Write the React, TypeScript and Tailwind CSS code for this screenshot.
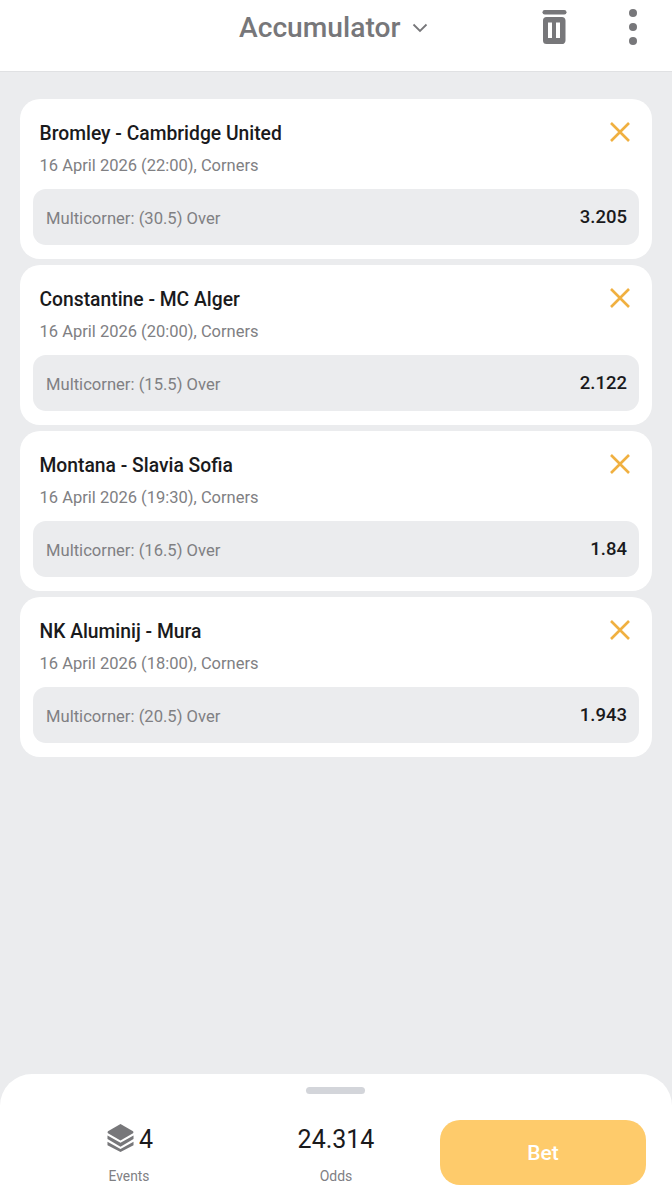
const bets = [
  { title: "Bromley - Cambridge United", date: "16 April 2026 (22:00), Corners", market: "Multicorner: (30.5) Over", odds: "3.205" },
  { title: "Constantine - MC Alger", date: "16 April 2026 (20:00), Corners", market: "Multicorner: (15.5) Over", odds: "2.122" },
  { title: "Montana - Slavia Sofia", date: "16 April 2026 (19:30), Corners", market: "Multicorner: (16.5) Over", odds: "1.84" },
  { title: "NK Aluminij - Mura", date: "16 April 2026 (18:00), Corners", market: "Multicorner: (20.5) Over", odds: "1.943" },
];

function Card({ b }: { b: (typeof bets)[number] }) {
  return (
    <div className="relative h-[160px] rounded-[20px] bg-white px-[13px] pt-[21px]">
      <div className="pl-[6.5px] text-[19.3px] leading-[28px] font-medium text-[#1a1a1c]">{b.title}</div>
      <div className="mt-[7px] pl-[6.5px] text-[16.5px] leading-[22px] text-[#808083]">{b.date}</div>
      <div className="mt-[12px] flex h-[56px] items-center justify-between rounded-[13px] bg-[#ebecee] pr-[12px] pl-[13px] pt-[2px]">
        <span className="relative top-[1px] text-[16.6px] text-[#808083]">{b.market}</span>
        <span className="text-[18.5px] font-medium text-[#1a1a1c]">{b.odds}</span>
      </div>
      <svg className="absolute top-[23px] right-[22px]" width="20" height="20" viewBox="0 0 20 20" fill="none" stroke="#f0b040" strokeWidth="2.6">
        <path d="M1 1 L19 19 M19 1 L1 19" />
      </svg>
    </div>
  );
}

export default function App() {
  return (
    <div className="flex h-[1199px] w-[672px] flex-col overflow-hidden bg-[#ebecee] font-['Roboto',sans-serif]">
      <header className="relative flex h-[72px] shrink-0 items-center border-b border-[#e0e1e3] bg-white pb-[16px]">
        <div className="ml-[239px] flex items-center gap-[12px]">
          <span className="text-[28.2px] leading-[34px] font-medium text-[#77777a]">Accumulator</span>
          <svg width="16" height="10" viewBox="0 0 16 10" fill="none" stroke="#77777a" strokeWidth="1.8">
            <path d="M1.5 1.5 L8 8 L14.500 1.500" />
          </svg>
        </div>
        <svg className="absolute top-[10px] left-[542px]" width="25" height="35" viewBox="0 0 25 35" fill="#77777a">
          <rect x="0.500" y="0" width="24" height="4.500" rx="2.200" />
          <path fillRule="evenodd" d="M4.500 7 H19.500 A3.500 3.500 0 0 1 23.500 10.500 V30.500 A3.500 3.500 0 0 1 19.500 34 H4.500 A3.500 3.500 0 0 1 1 30.500 V10.500 A3.500 3.500 0 0 1 4.500 7 Z M6 12.500 V28 H10 V12.500 Z M14 12.500 V28 H18 V12.500 Z" />
        </svg>
        <svg className="absolute top-[8px] left-[628px]" width="10" height="37" viewBox="0 0 10 37" fill="#77777a">
          <circle cx="5" cy="5" r="4" />
          <circle cx="5" cy="19" r="4" />
          <circle cx="5" cy="33" r="4" />
        </svg>
      </header>
      <main className="flex flex-1 flex-col gap-[6px] pt-[27px] pr-[20px] pl-[20px]">
        {bets.map((b) => (
          <Card key={b.title} b={b} />
        ))}
      </main>
      <footer className="relative flex h-[125px] shrink-0 rounded-t-[32px] bg-white">
        <div className="absolute top-[13px] left-[306px] h-[7px] w-[59px] rounded-full bg-[#d3d5da]" />
        <div className="ml-[106px] flex w-[48px] flex-col items-center pt-[51px]">
          <div className="flex items-center gap-[5px]">
            <svg width="27" height="28" viewBox="0 0 28 29" fill="#77777a" className="relative top-[-2px] shrink-0">
              <path d="M14 0 L27 7.500 Q28 8.500 27 9.500 L14 17 L1 9.500 Q0 8.500 1 7.500 Z" />
              <path d="M0.500 12 L14 19.500 L27.500 12 L27.500 15.500 L14 23.500 L0.500 15.500 Z" />
              <path d="M0.500 18.500 L14 26 L27.500 18.500 L27.500 22 L14 29 L0.500 22 Z" />
            </svg>
            <span className="text-[25px] leading-[30px] text-[#1a1a1c]">4</span>
          </div>
          <span className="relative left-[-1px] mt-[12px] text-[13.8px] leading-[18px] text-[#808083]">Events</span>
        </div>
        <div className="ml-[143px] flex w-[78px] flex-col items-center pt-[51px]">
          <span className="text-[25px] leading-[30px] text-[#1a1a1c]">24.314</span>
          <span className="mt-[12px] text-[14px] leading-[18px] text-[#808083]">Odds</span>
        </div>
        <button className="mt-[46px] ml-[65px] flex h-[65px] w-[206px] items-center justify-center rounded-[20px] bg-[#fecb6b] pt-[2px] text-[21px] font-medium text-white">
          Bet
        </button>
      </footer>
    </div>
  );
}
